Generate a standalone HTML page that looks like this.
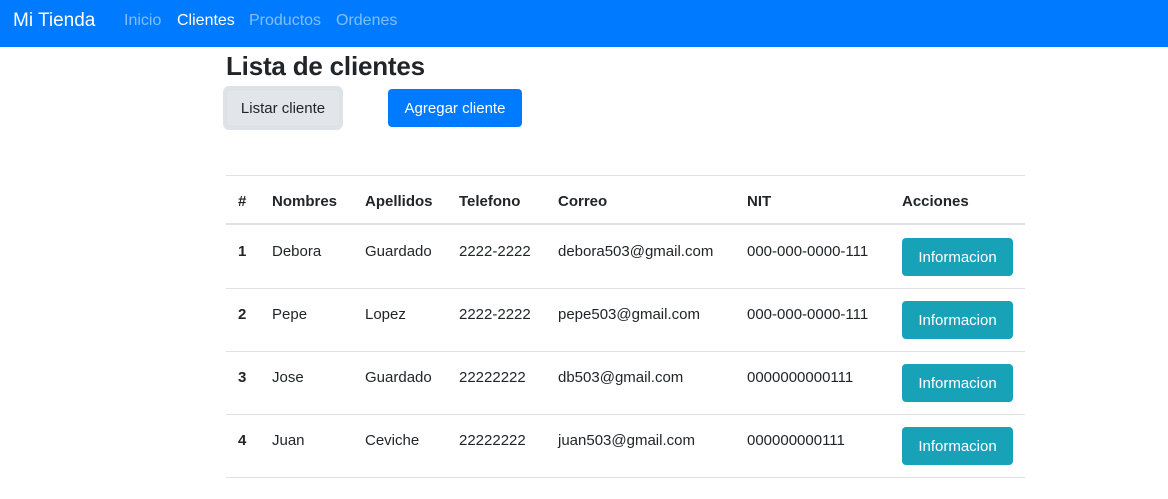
<!DOCTYPE html>
<html><head><meta charset="utf-8"><style>
*{margin:0;padding:0;box-sizing:border-box}
body{width:1168px;height:499px;background:#fff;font-family:"Liberation Sans",sans-serif;color:#212529;position:relative;overflow:hidden;font-size:15px}
.nav{position:absolute;left:0;top:0;width:1168px;height:47px;background:#007bff}
.a{position:absolute;white-space:nowrap}
.nav .a{top:12px;font-size:16px;color:rgba(255,255,255,.5)}
.line{position:absolute;left:226px;width:799px;height:1px;background:#dee2e6}
.btn{position:absolute;border-radius:4px;font-size:15px;text-align:center;line-height:39px;height:38px}
.info{left:902px;width:111px;background:#17a2b8;color:#fff}
b{font-weight:bold}
</style></head><body>
<div class="nav">
<div class="a" style="left:13px;top:10px;font-size:19px;color:#fff">Mi Tienda</div>
<div class="a" style="left:124px">Inicio</div>
<div class="a" style="left:177px;color:#fff">Clientes</div>
<div class="a" style="left:249px">Productos</div>
<div class="a" style="left:336px">Ordenes</div>
</div>
<div class="a" style="left:226px;top:51px;font-size:26px;font-weight:bold;letter-spacing:-0.2px">Lista de clientes</div>
<div class="btn" style="left:223px;top:86px;width:120px;height:44px;border-radius:6px;background:#dfe3e8"></div>
<div class="btn" style="left:226px;top:89px;width:114px;background:#e2e6ea;border:1px solid #dae0e5;line-height:37px">Listar cliente</div>
<div class="btn" style="left:388px;top:89px;width:134px;background:#007bff;color:#fff">Agregar cliente</div>
<div class="line" style="top:175px"></div>
<div class="line" style="top:223px;height:2px"></div>
<div class="line" style="top:288px"></div>
<div class="line" style="top:351px"></div>
<div class="line" style="top:414px"></div>
<div class="line" style="top:477px"></div>
<div class="a" style="top:193px;left:238px;font-weight:bold">#</div>
<div class="a" style="top:193px;left:272px;font-weight:bold">Nombres</div>
<div class="a" style="top:193px;left:365px;font-weight:bold">Apellidos</div>
<div class="a" style="top:193px;left:459px;font-weight:bold">Telefono</div>
<div class="a" style="top:193px;left:558px;font-weight:bold">Correo</div>
<div class="a" style="top:193px;left:747px;font-weight:bold">NIT</div>
<div class="a" style="top:193px;left:902px;font-weight:bold">Acciones</div>

<div class="a" style="top:243px;left:238px"><b>1</b></div><div class="a" style="top:243px;left:272px">Debora</div><div class="a" style="top:243px;left:365px">Guardado</div><div class="a" style="top:243px;left:459px">2222-2222</div><div class="a" style="top:243px;left:558px">debora503@gmail.com</div><div class="a" style="top:243px;left:747px">000-000-0000-111</div><div class="btn info" style="top:238px">Informacion</div>
<div class="a" style="top:306px;left:238px"><b>2</b></div><div class="a" style="top:306px;left:272px">Pepe</div><div class="a" style="top:306px;left:365px">Lopez</div><div class="a" style="top:306px;left:459px">2222-2222</div><div class="a" style="top:306px;left:558px">pepe503@gmail.com</div><div class="a" style="top:306px;left:747px">000-000-0000-111</div><div class="btn info" style="top:301px">Informacion</div>
<div class="a" style="top:369px;left:238px"><b>3</b></div><div class="a" style="top:369px;left:272px">Jose</div><div class="a" style="top:369px;left:365px">Guardado</div><div class="a" style="top:369px;left:459px">22222222</div><div class="a" style="top:369px;left:558px">db503@gmail.com</div><div class="a" style="top:369px;left:747px">0000000000111</div><div class="btn info" style="top:364px">Informacion</div>
<div class="a" style="top:432px;left:238px"><b>4</b></div><div class="a" style="top:432px;left:272px">Juan</div><div class="a" style="top:432px;left:365px">Ceviche</div><div class="a" style="top:432px;left:459px">22222222</div><div class="a" style="top:432px;left:558px">juan503@gmail.com</div><div class="a" style="top:432px;left:747px">000000000111</div><div class="btn info" style="top:427px">Informacion</div>
</body></html>
